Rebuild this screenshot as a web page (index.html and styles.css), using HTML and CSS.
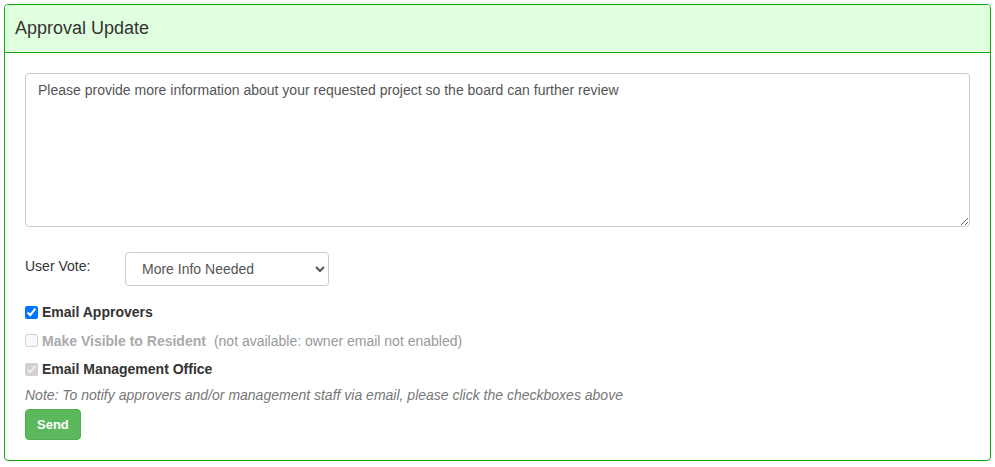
FILE: index.html
```html
<!DOCTYPE html>
<html>
<head>
<meta charset="utf-8">
<link rel="stylesheet" href="styles.css">
</head>
<body>
<div class="panel">
  <div class="panel-heading">Approval Update</div>
  <div class="panel-body">
    <textarea class="msg">Please provide more information about your requested project so the board can further review</textarea>
    <div class="vote-row">
      <label class="vote-label">User Vote:</label>
      <select class="vote-select">
        <option>More Info Needed</option>
      </select>
    </div>
    <div class="checks">
      <label class="check"><input type="checkbox" checked><span class="check-text">Email Approvers</span></label>
      <label class="check disabled"><input type="checkbox" disabled><span class="check-text">Make Visible to Resident</span><span class="check-note">(not available: owner email not enabled)</span></label>
      <label class="check"><input type="checkbox" checked disabled><span class="check-text">Email Management Office</span></label>
    </div>
    <p class="note">Note: To notify approvers and/or management staff via email, please click the checkboxes above</p>
    <button class="btn-send">Send</button>
  </div>
</div>
</body>
</html>
```

FILE: styles.css
```css
html, body {
  margin: 0;
  padding: 0;
  background: #fff;
}
body {
  padding: 4px 4px 0 4px;
  font-family: "Liberation Sans", Arial, sans-serif;
  font-size: 14px;
  color: #333;
}
.panel {
  border: 1px solid #11aa11;
  border-radius: 4px;
  box-sizing: border-box;
  width: 987px;
}
.panel-heading {
  background: #dfffdf;
  border-bottom: 1px solid #11aa11;
  border-radius: 3px 3px 0 0;
  height: 48px;
  box-sizing: border-box;
  padding: 0 10px;
  display: flex;
  align-items: center;
  font-size: 18px;
  color: #333;
}
.panel-body {
  padding: 20px;
  display: flex;
  flex-direction: column;
  align-items: flex-start;
}
.msg {
  display: block;
  box-sizing: border-box;
  width: 945px;
  height: 154px;
  margin: 0;
  padding: 6px 12px;
  border: 1px solid #ccc;
  border-radius: 4px;
  font-family: "Liberation Sans", Arial, sans-serif;
  font-size: 14px;
  line-height: 20px;
  color: #555;
  resize: vertical;
}
.vote-row {
  display: flex;
  align-items: flex-start;
  margin-top: 25px;
}
.vote-label {
  width: 100px;
  padding-top: 4px;
  line-height: 20px;
}
.vote-select {
  box-sizing: border-box;
  width: 204px;
  height: 34px;
  padding: 6px 8px 6px 12px;
  border: 1px solid #ccc;
  border-radius: 4px;
  background: #fff;
  font-family: "Liberation Sans", Arial, sans-serif;
  font-size: 14px;
  color: #555;
}
.checks {
  display: flex;
  flex-direction: column;
  margin-top: 12px;
}
.check {
  display: flex;
  align-items: center;
  height: 28.5px;
  font-weight: bold;
}
.check input {
  margin: 0 4px 0 0;
  width: 13px;
  height: 13px;
}
.check.disabled .check-text {
  color: #aaa;
}
.check-note {
  font-weight: normal;
  color: #999;
  margin-left: 8px;
}
.note {
  margin: 0;
  height: 22px;
  line-height: 22px;
  font-style: italic;
  color: #777;
}
.btn-send {
  margin-top: 3px;
  height: 31px;
  padding: 0 11px;
  border: 1px solid #4cae4c;
  border-radius: 4px;
  background: #5cb85c;
  color: #fff;
  font-family: "Liberation Sans", Arial, sans-serif;
  font-size: 13px;
  font-weight: bold;
}
```
